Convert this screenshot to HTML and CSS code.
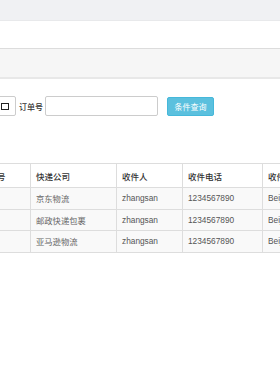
FILE: index.html
```html
<!DOCTYPE html>
<html>
<head>
<meta charset="utf-8">
<link rel="stylesheet" href="styles.css">
</head>
<body>
<div class="topbar"></div>
<div class="whitebar"></div>
<div class="panel"></div>
<div class="search">
  <div class="date-input"><span class="cal"></span></div>
  <label class="label">订单号</label>
  <input class="text-input" type="text">
  <button class="btn">条件查询</button>
</div>
<table class="grid">
  <thead>
    <tr><th class="c0">订单号</th><th class="c1">快递公司</th><th class="c2">收件人</th><th class="c3">收件电话</th><th class="c4">收件地址</th></tr>
  </thead>
  <tbody>
    <tr><td></td><td class="cn">京东物流</td><td>zhangsan</td><td>1234567890</td><td>Beijing</td></tr>
    <tr><td></td><td class="cn">邮政快递包裹</td><td>zhangsan</td><td>1234567890</td><td>Beijing</td></tr>
    <tr><td></td><td class="cn">亚马逊物流</td><td>zhangsan</td><td>1234567890</td><td>Beijing</td></tr>
  </tbody>
</table>
</body>
</html>
```

FILE: styles.css
```css
html, body {
  margin: 0;
  padding: 0;
  background: #fff;
  overflow: hidden;
  width: 280px;
  height: 380px;
}
body {
  font-family: "Liberation Sans", "Noto Sans CJK SC", sans-serif;
  font-size: 8.3px;
  color: #555;
}
.topbar {
  height: 20px;
  background: #f0f1f3;
  border-bottom: 1px solid #e8e9eb;
}
.whitebar {
  height: 27px;
  background: #fff;
}
.panel {
  height: 28px;
  background: #f6f6f6;
  border-top: 1px solid #dcdcdc;
  border-bottom: 2px solid #e8e8e8;
}
.search {
  display: flex;
  align-items: center;
  margin-top: 17px;
  height: 20px;
}
.date-input {
  box-sizing: border-box;
  width: 80px;
  height: 20px;
  margin-left: -64px;
  border: 1px solid #ccc;
  border-radius: 2px;
  background: #fff;
  display: flex;
  align-items: center;
  justify-content: flex-end;
  padding-right: 6px;
}
.cal {
  box-sizing: border-box;
  width: 8px;
  height: 7px;
  border: 1.6px solid #222;
}
.label {
  margin-left: 3px;
  font-family: "Noto Sans CJK SC", sans-serif;
  font-size: 8px;
  font-weight: 500;
  color: #333;
}
.text-input {
  box-sizing: border-box;
  width: 113px;
  height: 20px;
  margin: 0 0 0 2px;
  border: 1px solid #ccc;
  border-radius: 2px;
  padding: 0;
  background: #fff;
}
.btn {
  box-sizing: border-box;
  width: 47px;
  height: 19px;
  margin-left: 9px;
  padding: 0;
  border: 1px solid #46b8da;
  border-radius: 2px;
  background: #5bc0de;
  color: #fff;
  font-family: "Noto Sans CJK SC", sans-serif;
  font-size: 8px;
}
.grid {
  margin-top: 47px;
  margin-left: -26px;
  border-collapse: collapse;
  table-layout: fixed;
  width: 374px;
}
.grid th, .grid td {
  border: 1px solid #ddd;
  padding: 0 5px;
  text-align: left;
  white-space: nowrap;
  overflow: hidden;
}
.grid th {
  height: 23px;
  font-family: "Noto Sans CJK SC", sans-serif;
  font-size: 8.5px;
  font-weight: 500;
  color: #333;
  background: #fff;
}
.grid td {
  height: 20.5px;
  background: #f9f9f9;
  color: #555;
}
.grid td.cn {
  font-family: "Noto Sans CJK SC", sans-serif;
  color: #666;
}
.c0 { width: 45px; }
.c1 { width: 75px; }
.c2 { width: 55px; }
.c3 { width: 69px; }
.c4 { width: 80px; }
```
